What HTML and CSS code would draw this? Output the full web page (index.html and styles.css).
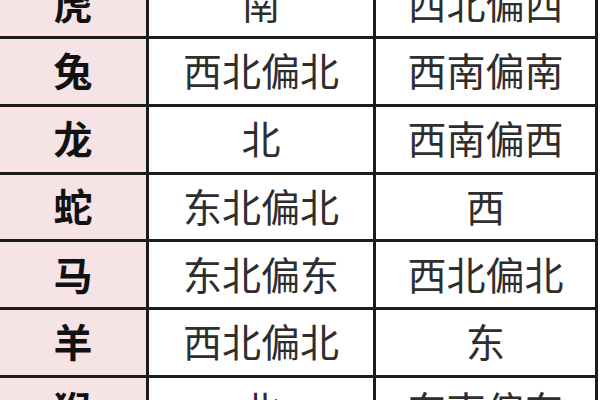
FILE: index.html
```html
<!DOCTYPE html>
<html lang="zh-CN">
<head>
<meta charset="utf-8">
<title>生肖方位</title>
<link rel="stylesheet" href="styles.css">
</head>
<body>
<div class="table">
  <div class="cell animal">虎</div><div class="cell">南</div><div class="cell">西北偏西</div>
  <div class="cell animal">兔</div><div class="cell">西北偏北</div><div class="cell">西南偏南</div>
  <div class="cell animal">龙</div><div class="cell">北</div><div class="cell">西南偏西</div>
  <div class="cell animal">蛇</div><div class="cell">东北偏北</div><div class="cell">西</div>
  <div class="cell animal">马</div><div class="cell">东北偏东</div><div class="cell">西北偏北</div>
  <div class="cell animal">羊</div><div class="cell">西北偏北</div><div class="cell">东</div>
  <div class="cell animal">猴</div><div class="cell">北</div><div class="cell">东南偏东</div>
</div>
</body>
</html>
```

FILE: styles.css
```css
html, body {
  margin: 0;
  padding: 0;
  background: #ffffff;
  overflow: hidden;
}

body {
  font-family: "Noto Sans CJK SC", "Noto Sans", sans-serif;
}

.table {
  display: grid;
  grid-template-columns: 146px 224px 219px;
  grid-auto-rows: 64.75px;
  gap: 3px;
  width: 595px;
  padding-right: 3px;
  background: #1c1c1c;
  margin-top: -28.75px;
}

.cell {
  display: flex;
  align-items: center;
  justify-content: center;
  background: #ffffff;
  color: #2e2e2e;
  font-size: 39px;
  line-height: 1;
  font-weight: 400;
  padding-bottom: 3px;
}

.animal {
  background: #f6e3e5;
  color: #111111;
  font-weight: 700;
}
```
